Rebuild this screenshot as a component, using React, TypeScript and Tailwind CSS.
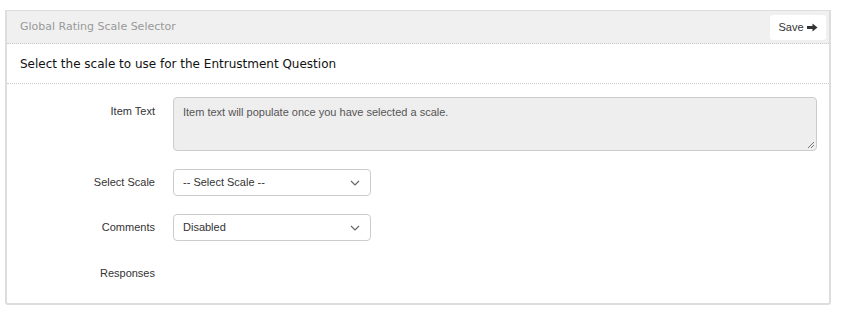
import React from 'react';

const labelCls = 'w-[148px] shrink-0 text-right text-[11px] text-[#333]';

function Chevron() {
  return (
    <svg width="10" height="6" viewBox="0 0 10 6" className="shrink-0">
      <path d="M1 1 L5 5 L9 1" fill="none" stroke="#666" strokeWidth="1.2" />
    </svg>
  );
}

function FakeSelect({ value }: { value: string }) {
  return (
    <div className="flex h-[27px] w-[198px] items-center justify-between rounded-[4px] border border-[#ccc] bg-white pl-[9px] pr-[10px] text-[11px] text-[#333]">
      <span>{value}</span>
      <Chevron />
    </div>
  );
}

export default function App() {
  return (
    <div className="min-h-[319px] bg-white pt-[10px] pl-[5px] pr-[13px] font-['Liberation_Sans',Arial,sans-serif]">
      <div className="h-[295px] rounded-b-[3px] border-x-2 border-b-2 border-t border-[#ddd]">
        {/* Header */}
        <div className="flex h-[33px] items-center justify-between border-b border-dotted border-[#ccc] bg-[#f0f0f0] pl-[13px] pr-[3px]">
          <span className="font-['DejaVu_Sans',sans-serif] text-[11px] text-[#999]">Global Rating Scale Selector</span>
          <button className="flex h-[25px] w-[56px] items-center justify-center gap-[3px] rounded-[3px] bg-white text-[11px] text-[#333]">
            Save
            <svg width="11" height="9" viewBox="0 0 11 9">
              <path d="M0 3 H5.5 V0.5 L10.5 4.5 L5.5 8.5 V6 H0 Z" fill="#333" />
            </svg>
          </button>
        </div>

        {/* Title */}
        <div className="flex h-[40px] items-center border-b border-dotted border-[#ccc] pl-[13px]">
          <span className="font-['DejaVu_Sans',sans-serif] text-[12px] text-[#111]">
            Select the scale to use for the Entrustment Question
          </span>
        </div>

        {/* Form */}
        <div className="flex flex-col pt-[13px] pr-[12px]">
          <div className="flex items-start">
            <div className={labelCls + ' pt-[6px]'}>Item Text</div>
            <div className="ml-[18px] flex-1">
              <div className="relative h-[54px] rounded-[4px] border border-[#ccc] bg-[#eee] px-[9px] pt-[6px] text-[11px] text-[#555]">
                Item text will populate once you have selected a scale.
                <svg width="8" height="8" viewBox="0 0 8 8" className="absolute bottom-[1px] right-[1px]">
                  <path d="M7 1 L1 7 M7 4 L4 7" stroke="#777" strokeWidth="1" />
                </svg>
              </div>
            </div>
          </div>

          <div className="mt-[18px] flex items-center">
            <div className={labelCls}>Select Scale</div>
            <div className="ml-[18px]">
              <FakeSelect value="-- Select Scale --" />
            </div>
          </div>

          <div className="mt-[18px] flex items-center">
            <div className={labelCls}>Comments</div>
            <div className="ml-[18px]">
              <FakeSelect value="Disabled" />
            </div>
          </div>

          <div className="mt-[24px] flex items-center">
            <div className={labelCls}>Responses</div>
          </div>
        </div>
      </div>
    </div>
  );
}
